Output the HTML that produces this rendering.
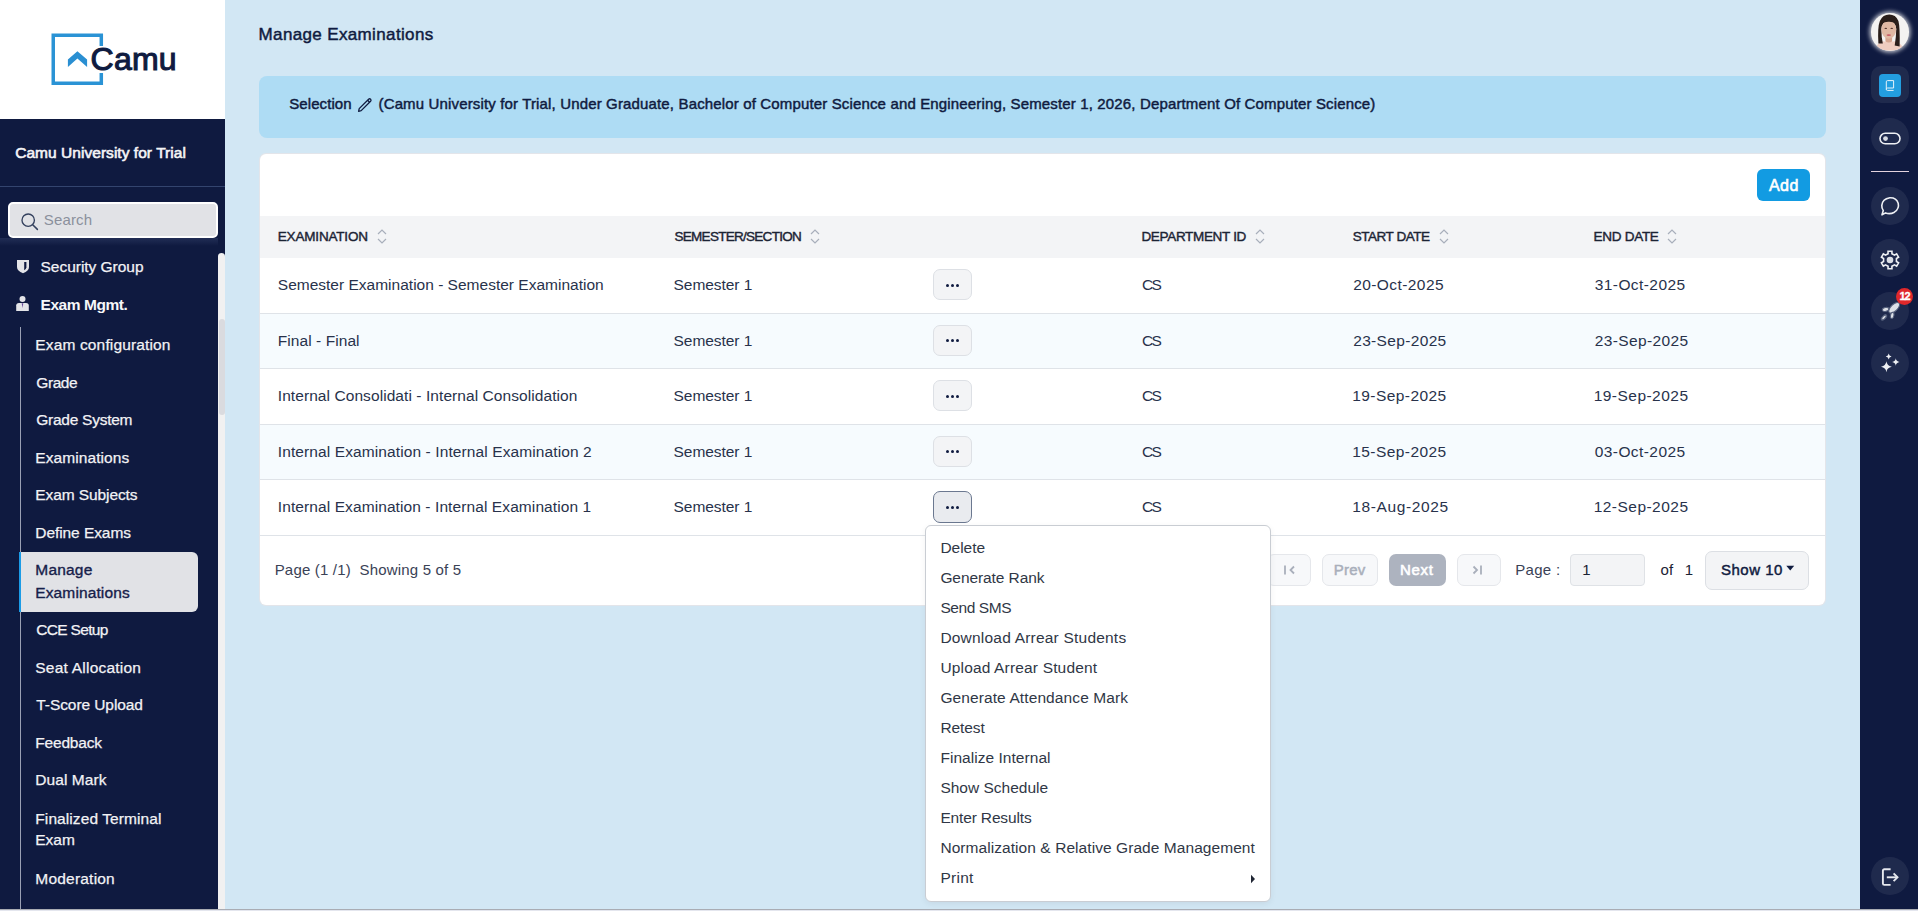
<!DOCTYPE html>
<html><head><meta charset="utf-8"><title>Manage Examinations</title>
<style>
html,body{margin:0;padding:0}
body{width:1918px;height:911px;overflow:hidden;position:relative;background:#d2e7f4;font-family:"Liberation Sans", sans-serif}
</style></head><body>
<div style="position:absolute;left:0px;top:0px;width:225px;height:119px;background:#ffffff"></div>
<div style="position:absolute;left:0px;top:119px;width:225px;height:790px;background:#0f1a40"></div>
<svg style="position:absolute;left:0;top:0" width="225" height="119" viewBox="0 0 225 119">
<path d="M101.3 45.9 V35.35 H53.25 V83.35 H101.3 V73.1" fill="none" stroke="#2a93d5" stroke-width="3.5"/>
<polygon points="67.9,59.5 77.4,51.2 87.1,59.5 87.1,67 77.4,58.6 67.9,67" fill="#2a8fd2"/>
</svg>
<div style="position:absolute;left:0px;top:186px;width:225px;height:1px;background:#33446e"></div>
<div style="position:absolute;left:0px;top:238px;width:218px;height:8px;background:linear-gradient(rgba(80,95,140,0.28), rgba(80,95,140,0))"></div>
<div style="position:absolute;left:8px;top:202px;width:210px;height:36px;background:#e1e2e6;border:2px solid #ffffff;box-sizing:border-box;border-radius:5px"></div>
<svg style="position:absolute;left:20px;top:212px" width="20" height="20" viewBox="0 0 20 20">
<circle cx="8.2" cy="8.2" r="6.2" fill="none" stroke="#34415e" stroke-width="1.35"/>
<line x1="12.7" y1="12.7" x2="17.4" y2="17.4" stroke="#34415e" stroke-width="1.5" stroke-linecap="round"/>
</svg>
<div style="position:absolute;left:218px;top:253px;width:7px;height:656px;background:#f1f1f1;border-radius:4px 4px 0 0"></div>
<div style="position:absolute;left:218.5px;top:319px;width:6px;height:96px;background:#dadbdf;border-radius:3px"></div>
<svg style="position:absolute;left:15px;top:258px" width="16" height="17" viewBox="0 0 16 17">
<path d="M2 2 H14 V9 Q14 13 8 15.3 Q2 13 2 9 Z" fill="#e3e4e8"/>
<path d="M9.2 4 H11.4 V9.2 Q11.2 11.3 9.2 12.2 Z" fill="#0f1a40"/>
</svg>
<svg style="position:absolute;left:15px;top:295px" width="16" height="17" viewBox="0 0 16 17">
<circle cx="7.5" cy="4" r="3" fill="#e3e4e8"/>
<path d="M1.2 16 V10.5 Q1.2 8 4 8 H11 Q13.8 8 13.8 10.5 V16 Z" fill="#e3e4e8"/>
<path d="M6.7 8.2 L7.5 13 L8.3 8.2 Z" fill="#6a4a9a"/>
</svg>
<div style="position:absolute;left:20px;top:327px;width:1px;height:582px;background:#9aa0b4"></div>
<div style="position:absolute;left:19px;top:552px;width:179px;height:60px;background:#e1e2e6;border-radius:0 6px 6px 0"></div>
<div style="position:absolute;left:19px;top:552px;width:2px;height:60px;background:#1b9be6"></div>
<div style="position:absolute;left:259px;top:76px;width:1567px;height:62px;background:#aedcf4;border-radius:8px"></div>
<svg style="position:absolute;left:356px;top:96px" width="18" height="18" viewBox="0 0 18 18">
<path d="M2.6 15.3 L3.2 12.6 L12.6 3.2 Q13.6 2.3 14.6 3.2 Q15.5 4.2 14.6 5.2 L5.2 14.6 Z" fill="none" stroke="#101b40" stroke-width="1.3" stroke-linejoin="round"/>
<line x1="11.6" y1="4.2" x2="13.6" y2="6.2" stroke="#101b40" stroke-width="1.3"/>
</svg>
<div style="position:absolute;left:260px;top:153.5px;width:1565px;height:451px;background:#ffffff;border-radius:6px;box-shadow:0 0 0 1px #e3e5ea"></div>
<div style="position:absolute;left:1757px;top:169px;width:53px;height:31.8px;background:#129be2;border-radius:6px"></div>
<div style="position:absolute;left:260px;top:216px;width:1565px;height:42px;background:#f3f4f6"></div>
<svg style="position:absolute;left:376.8px;top:228px" width="10" height="17" viewBox="0 0 10 17">
<path d="M1 6 L5 2 L9 6" fill="none" stroke="#a8afbb" stroke-width="1.2"/>
<path d="M1 11 L5 15 L9 11" fill="none" stroke="#a8afbb" stroke-width="1.2"/>
</svg>
<svg style="position:absolute;left:810.1px;top:228px" width="10" height="17" viewBox="0 0 10 17">
<path d="M1 6 L5 2 L9 6" fill="none" stroke="#a8afbb" stroke-width="1.2"/>
<path d="M1 11 L5 15 L9 11" fill="none" stroke="#a8afbb" stroke-width="1.2"/>
</svg>
<svg style="position:absolute;left:1255px;top:228px" width="10" height="17" viewBox="0 0 10 17">
<path d="M1 6 L5 2 L9 6" fill="none" stroke="#a8afbb" stroke-width="1.2"/>
<path d="M1 11 L5 15 L9 11" fill="none" stroke="#a8afbb" stroke-width="1.2"/>
</svg>
<svg style="position:absolute;left:1439px;top:228px" width="10" height="17" viewBox="0 0 10 17">
<path d="M1 6 L5 2 L9 6" fill="none" stroke="#a8afbb" stroke-width="1.2"/>
<path d="M1 11 L5 15 L9 11" fill="none" stroke="#a8afbb" stroke-width="1.2"/>
</svg>
<svg style="position:absolute;left:1667px;top:228px" width="10" height="17" viewBox="0 0 10 17">
<path d="M1 6 L5 2 L9 6" fill="none" stroke="#a8afbb" stroke-width="1.2"/>
<path d="M1 11 L5 15 L9 11" fill="none" stroke="#a8afbb" stroke-width="1.2"/>
</svg>
<div style="position:absolute;left:260px;top:258px;width:1565px;height:56px;background:#ffffff"></div>
<div style="position:absolute;left:933.4px;top:269.2px;width:38.2px;height:31.3px;background:#f3f4f6;border:1px solid #dde0e5;box-sizing:border-box;border-radius:7px"></div>
<div style="position:absolute;left:945.8px;top:283.5px;width:3px;height:3px;background:#101b40;border-radius:50%"></div>
<div style="position:absolute;left:951.0999999999999px;top:283.5px;width:3px;height:3px;background:#101b40;border-radius:50%"></div>
<div style="position:absolute;left:956.4px;top:283.5px;width:3px;height:3px;background:#101b40;border-radius:50%"></div>
<div style="position:absolute;left:260px;top:313px;width:1565px;height:56px;background:#f6fbfe"></div>
<div style="position:absolute;left:933.4px;top:325px;width:38.2px;height:31.3px;background:#f3f4f6;border:1px solid #dde0e5;box-sizing:border-box;border-radius:7px"></div>
<div style="position:absolute;left:945.8px;top:339.3px;width:3px;height:3px;background:#101b40;border-radius:50%"></div>
<div style="position:absolute;left:951.0999999999999px;top:339.3px;width:3px;height:3px;background:#101b40;border-radius:50%"></div>
<div style="position:absolute;left:956.4px;top:339.3px;width:3px;height:3px;background:#101b40;border-radius:50%"></div>
<div style="position:absolute;left:260px;top:368px;width:1565px;height:57px;background:#ffffff"></div>
<div style="position:absolute;left:933.4px;top:380.2px;width:38.2px;height:31.3px;background:#f3f4f6;border:1px solid #dde0e5;box-sizing:border-box;border-radius:7px"></div>
<div style="position:absolute;left:945.8px;top:394.5px;width:3px;height:3px;background:#101b40;border-radius:50%"></div>
<div style="position:absolute;left:951.0999999999999px;top:394.5px;width:3px;height:3px;background:#101b40;border-radius:50%"></div>
<div style="position:absolute;left:956.4px;top:394.5px;width:3px;height:3px;background:#101b40;border-radius:50%"></div>
<div style="position:absolute;left:260px;top:424px;width:1565px;height:56px;background:#f6fbfe"></div>
<div style="position:absolute;left:933.4px;top:436px;width:38.2px;height:31.3px;background:#f3f4f6;border:1px solid #dde0e5;box-sizing:border-box;border-radius:7px"></div>
<div style="position:absolute;left:945.8px;top:450.3px;width:3px;height:3px;background:#101b40;border-radius:50%"></div>
<div style="position:absolute;left:951.0999999999999px;top:450.3px;width:3px;height:3px;background:#101b40;border-radius:50%"></div>
<div style="position:absolute;left:956.4px;top:450.3px;width:3px;height:3px;background:#101b40;border-radius:50%"></div>
<div style="position:absolute;left:260px;top:479px;width:1565px;height:57px;background:#ffffff"></div>
<div style="position:absolute;left:933px;top:491.2px;width:38.6px;height:31.8px;background:#e9ebef;border:1px solid #6b7890;box-sizing:border-box;border-radius:7px"></div>
<div style="position:absolute;left:945.8px;top:505.5px;width:3px;height:3px;background:#101b40;border-radius:50%"></div>
<div style="position:absolute;left:951.0999999999999px;top:505.5px;width:3px;height:3px;background:#101b40;border-radius:50%"></div>
<div style="position:absolute;left:956.4px;top:505.5px;width:3px;height:3px;background:#101b40;border-radius:50%"></div>
<div style="position:absolute;left:260px;top:313px;width:1565px;height:1px;background:#dfe3e8"></div>
<div style="position:absolute;left:260px;top:368px;width:1565px;height:1px;background:#dfe3e8"></div>
<div style="position:absolute;left:260px;top:424px;width:1565px;height:1px;background:#dfe3e8"></div>
<div style="position:absolute;left:260px;top:479px;width:1565px;height:1px;background:#dfe3e8"></div>
<div style="position:absolute;left:260px;top:535px;width:1565px;height:1px;background:#dfe3e8"></div>
<div style="position:absolute;left:1266.6px;top:554px;width:44px;height:31.6px;background:#f7f8fa;border:1px solid #e5e7eb;box-sizing:border-box;border-radius:7px"></div>
<div style="position:absolute;left:1322px;top:554px;width:55.7px;height:31.6px;background:#f7f8fa;border:1px solid #e5e7eb;box-sizing:border-box;border-radius:7px"></div>
<div style="position:absolute;left:1388.8px;top:554px;width:57.1px;height:31.6px;background:#adb3bf;border-radius:7px"></div>
<div style="position:absolute;left:1457px;top:554px;width:43.7px;height:31.6px;background:#f7f8fa;border:1px solid #e5e7eb;box-sizing:border-box;border-radius:7px"></div>
<svg style="position:absolute;left:1281px;top:562px" width="16" height="16" viewBox="0 0 16 16">
<line x1="4" y1="3.5" x2="4" y2="12.5" stroke="#a9afbb" stroke-width="1.8"/>
<path d="M13 4.5 L9.5 8 L13 11.5" fill="none" stroke="#a9afbb" stroke-width="1.8"/>
</svg>
<svg style="position:absolute;left:1472px;top:562px" width="16" height="16" viewBox="0 0 16 16">
<path d="M1.5 4.5 L5 8 L1.5 11.5" fill="none" stroke="#a9afbb" stroke-width="1.8"/>
<line x1="9" y1="3.5" x2="9" y2="12.5" stroke="#a9afbb" stroke-width="1.8"/>
</svg>
<div style="position:absolute;left:1570px;top:554.3px;width:74.7px;height:32.2px;background:#f3f4f6;border:1px solid #dfe2e6;box-sizing:border-box;border-radius:4px"></div>
<div style="position:absolute;left:1705.1px;top:551.2px;width:104.4px;height:38.4px;background:#f3f4f6;border:1px solid #dcdfe4;box-sizing:border-box;border-radius:7px"></div>
<svg style="position:absolute;left:1786px;top:565px" width="9" height="7" viewBox="0 0 9 7">
<path d="M0.3 0.8 H8.2 L4.25 5.6 Z" fill="#101b40"/>
</svg>
<div style="position:absolute;left:925.4px;top:525.2px;width:345.3px;height:376.4px;background:#ffffff;border:1px solid #c9cdd3;box-sizing:border-box;border-radius:6px;box-shadow:0 2px 6px rgba(0,0,0,0.06)"></div>
<svg style="position:absolute;left:1250px;top:874px" width="6" height="10" viewBox="0 0 6 10">
<path d="M1 0.8 L5 5 L1 9.2 Z" fill="#202634"/>
</svg>
<div style="position:absolute;left:1860px;top:0px;width:58px;height:909px;background:#0f1a40"></div>
<div style="position:absolute;left:1871.2px;top:13.2px;width:37.5px;height:37.5px;border-radius:50%;background:#f4f2f1;box-shadow:0 0 4px 1.5px rgba(255,255,255,0.75);overflow:hidden">
<svg width="37.5" height="37.5" viewBox="0 0 38 38">
<path d="M4 38 Q6 30 12 28.5 Q18 30 24 28.5 Q31 30 34 38 Z" fill="#efcdc0"/>
<path d="M7.5 31 Q6.5 14 9 8 Q12 1.5 18.5 1.5 Q25 1.5 27.8 8 Q29.5 14 29 34 L24 33 Q25.5 24 25.6 16 Q25 9 18 8.5 Q11 9 10.5 16 Q10.5 25 12 31 Z" fill="#2a1e1a"/>
<path d="M14.6 23 H21.4 V29 Q18 31 14.6 29 Z" fill="#d6a690"/>
<ellipse cx="18" cy="16.6" rx="7.5" ry="9.6" fill="#e0b8a3"/>
<path d="M10.8 11 Q13 6.5 18 6.6 Q23 6.6 25.2 11 Q22 8.6 18 8.8 Q14 8.6 10.8 11 Z" fill="#2a1e1a"/>
<ellipse cx="15" cy="15.6" rx="1.3" ry="0.7" fill="#5a3a30"/>
<ellipse cx="21" cy="15.6" rx="1.3" ry="0.7" fill="#5a3a30"/>
<ellipse cx="18" cy="22.4" rx="2.3" ry="0.9" fill="#c85a66"/>
</svg></div>
<div style="position:absolute;left:1871.2px;top:65.8px;width:37.5px;height:37px;background:rgba(255,255,255,0.07);border-radius:10px"></div>
<div style="position:absolute;left:1879px;top:74px;width:22px;height:23px;background:#239ee0;border-radius:4px"></div>
<svg style="position:absolute;left:1884px;top:79px" width="12" height="13" viewBox="0 0 12 13">
<path d="M2.3 10.5 V2.8 Q2.3 1.6 3.5 1.6 H9.6 V9 H3.5 Q2.3 9 2.3 10.2 Q2.3 11.4 3.5 11.4 H9.6" fill="none" stroke="#e6f3fb" stroke-width="1"/>
</svg>
<div style="position:absolute;left:1871px;top:118px;width:38px;height:38px;background:rgba(255,255,255,0.07);border-radius:50%"></div>
<div style="position:absolute;left:1871px;top:186.5px;width:38px;height:38px;background:rgba(255,255,255,0.07);border-radius:50%"></div>
<div style="position:absolute;left:1871px;top:239px;width:38px;height:38px;background:rgba(255,255,255,0.07);border-radius:50%"></div>
<div style="position:absolute;left:1871px;top:291.5px;width:38px;height:38px;background:rgba(255,255,255,0.07);border-radius:50%"></div>
<div style="position:absolute;left:1871px;top:344px;width:38px;height:38px;background:rgba(255,255,255,0.07);border-radius:50%"></div>
<div style="position:absolute;left:1871px;top:857.4px;width:38px;height:38px;background:rgba(255,255,255,0.07);border-radius:50%"></div>
<svg style="position:absolute;left:1878px;top:131px" width="24" height="15" viewBox="0 0 24 15">
<rect x="2" y="2.3" width="20" height="10.5" rx="5.25" fill="none" stroke="#eef0f4" stroke-width="1.6"/>
<circle cx="7.5" cy="7.6" r="2.4" fill="#d8dbe2"/>
</svg>
<div style="position:absolute;left:1871px;top:170.8px;width:38px;height:1.3px;background:#e3d3de"></div>
<svg style="position:absolute;left:1879px;top:195px" width="22" height="22" viewBox="0 0 22 22">
<path d="M3 19.8 L4.3 15.6 Q2.6 13 2.8 10.4 Q3.3 4.2 10.8 2.8 Q17.2 2.5 19.2 8.2 Q20.5 13.6 15.4 17.2 Q11 19.6 6.6 17.9 Z" fill="none" stroke="#eef0f4" stroke-width="1.6" stroke-linejoin="round"/>
</svg>
<svg style="position:absolute;left:1878.2px;top:247.9px" width="24" height="24" viewBox="0 0 24 24">
<path d="M10.07 5.69 L10.05 3.21 L13.95 3.21 L13.93 5.69 L16.50 7.17 L18.64 5.92 L20.58 9.29 L18.43 10.52 L18.43 13.48 L20.58 14.71 L18.64 18.08 L16.50 16.83 L13.93 18.31 L13.95 20.79 L10.05 20.79 L10.07 18.31 L7.50 16.83 L5.36 18.08 L3.42 14.71 L5.57 13.48 L5.57 10.52 L3.42 9.29 L5.36 5.92 L7.50 7.17 Z" fill="none" stroke="#eef0f4" stroke-width="1.6" stroke-linejoin="miter"/>
<circle cx="12" cy="12" r="3.3" fill="#dcdfe6"/>
</svg>
<svg style="position:absolute;left:1870px;top:285px" width="48" height="48" viewBox="0 0 48 48">
<g fill="#dde0e7" stroke="#56617d" stroke-width="1.1">
<ellipse cx="24.2" cy="22.8" rx="6.9" ry="3.3" transform="rotate(-44 24.2 22.8)"/>
<ellipse cx="15.6" cy="24.4" rx="3.3" ry="1.9" transform="rotate(-12 15.6 24.4)"/>
<ellipse cx="22.2" cy="30.4" rx="3.1" ry="1.7" transform="rotate(-78 22.2 30.4)"/>
</g>
<ellipse cx="14" cy="32.4" rx="3.9" ry="2.1" transform="rotate(-45 14 32.4)" fill="#56617d"/>
<ellipse cx="14" cy="32.4" rx="2.3" ry="0.8" transform="rotate(-45 14 32.4)" fill="#dde0e7"/>
</svg>
<div style="position:absolute;left:1896.2px;top:287.5px;width:17px;height:17px;border-radius:50%;background:#e0282b"></div>
<svg style="position:absolute;left:1880px;top:352px" width="21" height="21" viewBox="0 0 21 21">
<path d="M6.4 9.3 Q7 14 11.8 14.8 Q7 15.6 6.4 20.2 Q5.8 15.6 1 14.8 Q5.8 14 6.4 9.3 Z" fill="#eef0f4"/>
<path d="M15.8 6.3 Q16.2 9.5 19.5 10 Q16.2 10.5 15.8 13.8 Q15.4 10.5 12.1 10 Q15.4 9.5 15.8 6.3 Z" fill="#eef0f4"/>
<path d="M8.7 1.6 Q9 4.1 11.6 4.5 Q9 4.9 8.7 7.4 Q8.4 4.9 5.8 4.5 Q8.4 4.1 8.7 1.6 Z" fill="#eef0f4"/>
</svg>
<svg style="position:absolute;left:1881px;top:867px" width="19" height="20" viewBox="0 0 19 20">
<path d="M9.6 2.3 H3.4 Q1.9 2.3 1.9 3.8 V16.4 Q1.9 17.9 3.4 17.9 H9.6" fill="none" stroke="#e6e8ee" stroke-width="1.9"/>
<line x1="5.8" y1="10.3" x2="16.3" y2="10.3" stroke="#e6e8ee" stroke-width="1.9"/>
<path d="M12.6 6.4 L16.5 10.3 L12.6 14.2" fill="none" stroke="#e6e8ee" stroke-width="1.9"/>
</svg>
<div style="position:absolute;left:0px;top:909px;width:1918px;height:1px;background:#a9acb3"></div>
<div style="position:absolute;left:0px;top:910px;width:1918px;height:1px;background:#e4e6ee"></div>
<div id="tx0" style="position:absolute;left:90.50px;top:43.00px;font-size:32px;line-height:32px;font-weight:400;color:#0f1b40;letter-spacing:0.267px;white-space:nowrap;-webkit-text-stroke:1.1px">Camu</div>
<div id="tx1" style="position:absolute;left:15.20px;top:144.75px;font-size:15.5px;line-height:15.5px;font-weight:400;color:#f4f4f6;letter-spacing:0.042px;white-space:nowrap;-webkit-text-stroke:0.6px">Camu University for Trial</div>
<div id="tx2" style="position:absolute;left:43.80px;top:212.00px;font-size:15px;line-height:15px;font-weight:400;color:#8b909c;letter-spacing:0.160px;white-space:nowrap;">Search</div>
<div id="tx3" style="position:absolute;left:40.50px;top:258.75px;font-size:15.5px;line-height:15.5px;font-weight:400;color:#f2f2f5;letter-spacing:-0.023px;white-space:nowrap;-webkit-text-stroke:0.25px">Security Group</div>
<div id="tx4" style="position:absolute;left:40.50px;top:296.75px;font-size:15.5px;line-height:15.5px;font-weight:700;color:#f7f7f9;letter-spacing:-0.444px;white-space:nowrap;">Exam Mgmt.</div>
<div id="tx5" style="position:absolute;left:35.30px;top:336.75px;font-size:15.5px;line-height:15.5px;font-weight:400;color:#f2f2f5;letter-spacing:0.147px;white-space:nowrap;-webkit-text-stroke:0.25px">Exam configuration</div>
<div id="tx6" style="position:absolute;left:36.30px;top:374.75px;font-size:15.5px;line-height:15.5px;font-weight:400;color:#f2f2f5;letter-spacing:-0.425px;white-space:nowrap;-webkit-text-stroke:0.25px">Grade</div>
<div id="tx7" style="position:absolute;left:36.30px;top:411.75px;font-size:15.5px;line-height:15.5px;font-weight:400;color:#f2f2f5;letter-spacing:-0.264px;white-space:nowrap;-webkit-text-stroke:0.25px">Grade System</div>
<div id="tx8" style="position:absolute;left:35.30px;top:449.75px;font-size:15.5px;line-height:15.5px;font-weight:400;color:#f2f2f5;letter-spacing:0.082px;white-space:nowrap;-webkit-text-stroke:0.25px">Examinations</div>
<div id="tx9" style="position:absolute;left:35.30px;top:486.75px;font-size:15.5px;line-height:15.5px;font-weight:400;color:#f2f2f5;letter-spacing:-0.092px;white-space:nowrap;-webkit-text-stroke:0.25px">Exam Subjects</div>
<div id="tx10" style="position:absolute;left:35.30px;top:524.75px;font-size:15.5px;line-height:15.5px;font-weight:400;color:#f2f2f5;letter-spacing:-0.073px;white-space:nowrap;-webkit-text-stroke:0.25px">Define Exams</div>
<div id="tx11" style="position:absolute;left:35.30px;top:561.75px;font-size:15.5px;line-height:15.5px;font-weight:400;color:#16204a;letter-spacing:0.200px;white-space:nowrap;-webkit-text-stroke:0.35px">Manage</div>
<div id="tx12" style="position:absolute;left:35.30px;top:584.75px;font-size:15.5px;line-height:15.5px;font-weight:400;color:#16204a;letter-spacing:0.118px;white-space:nowrap;-webkit-text-stroke:0.35px">Examinations</div>
<div id="tx13" style="position:absolute;left:36.30px;top:621.75px;font-size:15.5px;line-height:15.5px;font-weight:400;color:#f2f2f5;letter-spacing:-0.688px;white-space:nowrap;-webkit-text-stroke:0.25px">CCE Setup</div>
<div id="tx14" style="position:absolute;left:35.30px;top:659.75px;font-size:15.5px;line-height:15.5px;font-weight:400;color:#f2f2f5;letter-spacing:0.221px;white-space:nowrap;-webkit-text-stroke:0.25px">Seat Allocation</div>
<div id="tx15" style="position:absolute;left:36.30px;top:696.75px;font-size:15.5px;line-height:15.5px;font-weight:400;color:#f2f2f5;letter-spacing:-0.077px;white-space:nowrap;-webkit-text-stroke:0.25px">T-Score Upload</div>
<div id="tx16" style="position:absolute;left:35.30px;top:734.75px;font-size:15.5px;line-height:15.5px;font-weight:400;color:#f2f2f5;letter-spacing:-0.200px;white-space:nowrap;-webkit-text-stroke:0.25px">Feedback</div>
<div id="tx17" style="position:absolute;left:35.30px;top:771.75px;font-size:15.5px;line-height:15.5px;font-weight:400;color:#f2f2f5;letter-spacing:0.075px;white-space:nowrap;-webkit-text-stroke:0.25px">Dual Mark</div>
<div id="tx18" style="position:absolute;left:35.30px;top:810.75px;font-size:15.5px;line-height:15.5px;font-weight:400;color:#f2f2f5;letter-spacing:0.088px;white-space:nowrap;-webkit-text-stroke:0.25px">Finalized Terminal</div>
<div id="tx19" style="position:absolute;left:35.30px;top:831.75px;font-size:15.5px;line-height:15.5px;font-weight:400;color:#f2f2f5;letter-spacing:-0.033px;white-space:nowrap;-webkit-text-stroke:0.25px">Exam</div>
<div id="tx20" style="position:absolute;left:35.30px;top:870.75px;font-size:15.5px;line-height:15.5px;font-weight:400;color:#f2f2f5;letter-spacing:0.211px;white-space:nowrap;-webkit-text-stroke:0.25px">Moderation</div>
<div id="tx21" style="position:absolute;left:258.60px;top:26.00px;font-size:17px;line-height:17px;font-weight:400;color:#101b40;letter-spacing:0.356px;white-space:nowrap;-webkit-text-stroke:0.45px">Manage Examinations</div>
<div id="tx22" style="position:absolute;left:289.20px;top:96.00px;font-size:15px;line-height:15px;font-weight:400;color:#101b40;letter-spacing:0.088px;white-space:nowrap;-webkit-text-stroke:0.45px">Selection</div>
<div id="tx23" style="position:absolute;left:378.50px;top:96.00px;font-size:15px;line-height:15px;font-weight:400;color:#101b40;letter-spacing:0.149px;white-space:nowrap;-webkit-text-stroke:0.45px">(Camu University for Trial, Under Graduate, Bachelor of Computer Science and Engineering, Semester 1, 2026, Department Of Computer Science)</div>
<div id="tx24" style="position:absolute;left:1768.90px;top:177.50px;font-size:16px;line-height:16px;font-weight:400;color:#ffffff;letter-spacing:0.500px;white-space:nowrap;-webkit-text-stroke:0.6px">Add</div>
<div id="tx25" style="position:absolute;left:277.80px;top:229.75px;font-size:13.5px;line-height:13.5px;font-weight:400;color:#1b2334;letter-spacing:-0.180px;white-space:nowrap;-webkit-text-stroke:0.4px">EXAMINATION</div>
<div id="tx26" style="position:absolute;left:674.50px;top:229.75px;font-size:13.5px;line-height:13.5px;font-weight:400;color:#1b2334;letter-spacing:-0.720px;white-space:nowrap;-webkit-text-stroke:0.4px">SEMESTER/SECTION</div>
<div id="tx27" style="position:absolute;left:1141.40px;top:229.75px;font-size:13.5px;line-height:13.5px;font-weight:400;color:#1b2334;letter-spacing:-0.317px;white-space:nowrap;-webkit-text-stroke:0.4px">DEPARTMENT ID</div>
<div id="tx28" style="position:absolute;left:1352.70px;top:229.75px;font-size:13.5px;line-height:13.5px;font-weight:400;color:#1b2334;letter-spacing:-0.456px;white-space:nowrap;-webkit-text-stroke:0.4px">START DATE</div>
<div id="tx29" style="position:absolute;left:1593.60px;top:229.75px;font-size:13.5px;line-height:13.5px;font-weight:400;color:#1b2334;letter-spacing:-0.286px;white-space:nowrap;-webkit-text-stroke:0.4px">END DATE</div>
<div id="tx30" style="position:absolute;left:277.80px;top:276.75px;font-size:15.5px;line-height:15.5px;font-weight:400;color:#28324b;letter-spacing:0.005px;white-space:nowrap;">Semester Examination - Semester Examination</div>
<div id="tx31" style="position:absolute;left:673.60px;top:276.75px;font-size:15.5px;line-height:15.5px;font-weight:400;color:#28324b;letter-spacing:-0.067px;white-space:nowrap;">Semester 1</div>
<div id="tx32" style="position:absolute;left:1142.00px;top:276.75px;font-size:15.5px;line-height:15.5px;font-weight:400;color:#28324b;letter-spacing:-1.700px;white-space:nowrap;">CS</div>
<div id="tx33" style="position:absolute;left:1353.20px;top:276.75px;font-size:15.5px;line-height:15.5px;font-weight:400;color:#28324b;letter-spacing:0.420px;white-space:nowrap;">20-Oct-2025</div>
<div id="tx34" style="position:absolute;left:1594.70px;top:276.75px;font-size:15.5px;line-height:15.5px;font-weight:400;color:#28324b;letter-spacing:0.430px;white-space:nowrap;">31-Oct-2025</div>
<div id="tx35" style="position:absolute;left:277.80px;top:332.75px;font-size:15.5px;line-height:15.5px;font-weight:400;color:#28324b;letter-spacing:0.067px;white-space:nowrap;">Final - Final</div>
<div id="tx36" style="position:absolute;left:673.60px;top:332.75px;font-size:15.5px;line-height:15.5px;font-weight:400;color:#28324b;letter-spacing:-0.067px;white-space:nowrap;">Semester 1</div>
<div id="tx37" style="position:absolute;left:1142.00px;top:332.75px;font-size:15.5px;line-height:15.5px;font-weight:400;color:#28324b;letter-spacing:-1.700px;white-space:nowrap;">CS</div>
<div id="tx38" style="position:absolute;left:1353.20px;top:332.75px;font-size:15.5px;line-height:15.5px;font-weight:400;color:#28324b;letter-spacing:0.340px;white-space:nowrap;">23-Sep-2025</div>
<div id="tx39" style="position:absolute;left:1594.70px;top:332.75px;font-size:15.5px;line-height:15.5px;font-weight:400;color:#28324b;letter-spacing:0.370px;white-space:nowrap;">23-Sep-2025</div>
<div id="tx40" style="position:absolute;left:277.80px;top:387.75px;font-size:15.5px;line-height:15.5px;font-weight:400;color:#28324b;letter-spacing:0.073px;white-space:nowrap;">Internal Consolidati - Internal Consolidation</div>
<div id="tx41" style="position:absolute;left:673.60px;top:387.75px;font-size:15.5px;line-height:15.5px;font-weight:400;color:#28324b;letter-spacing:-0.067px;white-space:nowrap;">Semester 1</div>
<div id="tx42" style="position:absolute;left:1142.00px;top:387.75px;font-size:15.5px;line-height:15.5px;font-weight:400;color:#28324b;letter-spacing:-1.700px;white-space:nowrap;">CS</div>
<div id="tx43" style="position:absolute;left:1352.20px;top:387.75px;font-size:15.5px;line-height:15.5px;font-weight:400;color:#28324b;letter-spacing:0.440px;white-space:nowrap;">19-Sep-2025</div>
<div id="tx44" style="position:absolute;left:1593.70px;top:387.75px;font-size:15.5px;line-height:15.5px;font-weight:400;color:#28324b;letter-spacing:0.470px;white-space:nowrap;">19-Sep-2025</div>
<div id="tx45" style="position:absolute;left:277.80px;top:443.75px;font-size:15.5px;line-height:15.5px;font-weight:400;color:#28324b;letter-spacing:0.105px;white-space:nowrap;">Internal Examination - Internal Examination 2</div>
<div id="tx46" style="position:absolute;left:673.60px;top:443.75px;font-size:15.5px;line-height:15.5px;font-weight:400;color:#28324b;letter-spacing:-0.067px;white-space:nowrap;">Semester 1</div>
<div id="tx47" style="position:absolute;left:1142.00px;top:443.75px;font-size:15.5px;line-height:15.5px;font-weight:400;color:#28324b;letter-spacing:-1.700px;white-space:nowrap;">CS</div>
<div id="tx48" style="position:absolute;left:1352.20px;top:443.75px;font-size:15.5px;line-height:15.5px;font-weight:400;color:#28324b;letter-spacing:0.440px;white-space:nowrap;">15-Sep-2025</div>
<div id="tx49" style="position:absolute;left:1594.70px;top:443.75px;font-size:15.5px;line-height:15.5px;font-weight:400;color:#28324b;letter-spacing:0.430px;white-space:nowrap;">03-Oct-2025</div>
<div id="tx50" style="position:absolute;left:277.80px;top:498.75px;font-size:15.5px;line-height:15.5px;font-weight:400;color:#28324b;letter-spacing:0.093px;white-space:nowrap;">Internal Examination - Internal Examination 1</div>
<div id="tx51" style="position:absolute;left:673.60px;top:498.75px;font-size:15.5px;line-height:15.5px;font-weight:400;color:#28324b;letter-spacing:-0.067px;white-space:nowrap;">Semester 1</div>
<div id="tx52" style="position:absolute;left:1142.00px;top:498.75px;font-size:15.5px;line-height:15.5px;font-weight:400;color:#28324b;letter-spacing:-1.700px;white-space:nowrap;">CS</div>
<div id="tx53" style="position:absolute;left:1352.20px;top:498.75px;font-size:15.5px;line-height:15.5px;font-weight:400;color:#28324b;letter-spacing:0.630px;white-space:nowrap;">18-Aug-2025</div>
<div id="tx54" style="position:absolute;left:1593.70px;top:498.75px;font-size:15.5px;line-height:15.5px;font-weight:400;color:#28324b;letter-spacing:0.470px;white-space:nowrap;">12-Sep-2025</div>
<div id="tx55" style="position:absolute;left:274.70px;top:562.00px;font-size:15px;line-height:15px;font-weight:400;color:#3a4256;letter-spacing:0.177px;white-space:nowrap;">Page (1 /1)&nbsp; Showing 5 of 5</div>
<div id="tx56" style="position:absolute;left:1333.70px;top:562.00px;font-size:15px;line-height:15px;font-weight:400;color:#a9afbb;letter-spacing:0.233px;white-space:nowrap;-webkit-text-stroke:0.5px">Prev</div>
<div id="tx57" style="position:absolute;left:1400.00px;top:562.00px;font-size:15px;line-height:15px;font-weight:400;color:#ffffff;letter-spacing:0.667px;white-space:nowrap;-webkit-text-stroke:0.6px">Next</div>
<div id="tx58" style="position:absolute;left:1515.20px;top:562.00px;font-size:15px;line-height:15px;font-weight:400;color:#3a4256;letter-spacing:0.300px;white-space:nowrap;">Page :</div>
<div id="tx59" style="position:absolute;left:1582.30px;top:562.00px;font-size:15px;line-height:15px;font-weight:400;color:#1b2334;letter-spacing:0.000px;white-space:nowrap;">1</div>
<div id="tx60" style="position:absolute;left:1660.40px;top:562.00px;font-size:15px;line-height:15px;font-weight:400;color:#1b2334;letter-spacing:0.200px;white-space:nowrap;">of</div>
<div id="tx61" style="position:absolute;left:1684.70px;top:562.00px;font-size:15px;line-height:15px;font-weight:400;color:#1b2334;letter-spacing:0.000px;white-space:nowrap;">1</div>
<div id="tx62" style="position:absolute;left:1721.00px;top:562.00px;font-size:15px;line-height:15px;font-weight:400;color:#101b40;letter-spacing:0.500px;white-space:nowrap;-webkit-text-stroke:0.45px">Show 10</div>
<div id="tx63" style="position:absolute;left:940.40px;top:539.75px;font-size:15.5px;line-height:15.5px;font-weight:400;color:#303746;letter-spacing:-0.020px;white-space:nowrap;">Delete</div>
<div id="tx64" style="position:absolute;left:940.40px;top:569.75px;font-size:15.5px;line-height:15.5px;font-weight:400;color:#303746;letter-spacing:-0.083px;white-space:nowrap;">Generate Rank</div>
<div id="tx65" style="position:absolute;left:940.40px;top:599.75px;font-size:15.5px;line-height:15.5px;font-weight:400;color:#303746;letter-spacing:-0.429px;white-space:nowrap;">Send SMS</div>
<div id="tx66" style="position:absolute;left:940.40px;top:629.75px;font-size:15.5px;line-height:15.5px;font-weight:400;color:#303746;letter-spacing:0.209px;white-space:nowrap;">Download Arrear Students</div>
<div id="tx67" style="position:absolute;left:940.40px;top:659.75px;font-size:15.5px;line-height:15.5px;font-weight:400;color:#303746;letter-spacing:0.165px;white-space:nowrap;">Upload Arrear Student</div>
<div id="tx68" style="position:absolute;left:940.40px;top:689.75px;font-size:15.5px;line-height:15.5px;font-weight:400;color:#303746;letter-spacing:0.104px;white-space:nowrap;">Generate Attendance Mark</div>
<div id="tx69" style="position:absolute;left:940.40px;top:719.75px;font-size:15.5px;line-height:15.5px;font-weight:400;color:#303746;letter-spacing:-0.100px;white-space:nowrap;">Retest</div>
<div id="tx70" style="position:absolute;left:940.40px;top:749.75px;font-size:15.5px;line-height:15.5px;font-weight:400;color:#303746;letter-spacing:0.044px;white-space:nowrap;">Finalize Internal</div>
<div id="tx71" style="position:absolute;left:940.40px;top:779.75px;font-size:15.5px;line-height:15.5px;font-weight:400;color:#303746;letter-spacing:0.000px;white-space:nowrap;">Show Schedule</div>
<div id="tx72" style="position:absolute;left:940.40px;top:809.75px;font-size:15.5px;line-height:15.5px;font-weight:400;color:#303746;letter-spacing:-0.150px;white-space:nowrap;">Enter Results</div>
<div id="tx73" style="position:absolute;left:940.40px;top:839.75px;font-size:15.5px;line-height:15.5px;font-weight:400;color:#303746;letter-spacing:0.065px;white-space:nowrap;">Normalization &amp; Relative Grade Management</div>
<div id="tx74" style="position:absolute;left:940.40px;top:869.75px;font-size:15.5px;line-height:15.5px;font-weight:400;color:#303746;letter-spacing:0.275px;white-space:nowrap;">Print</div>
<div id="tx75" style="position:absolute;left:1899.50px;top:290.50px;font-size:11px;line-height:11px;font-weight:700;color:#ffffff;letter-spacing:-1.000px;white-space:nowrap;-webkit-text-stroke:0.3px">12</div>
</body></html>
